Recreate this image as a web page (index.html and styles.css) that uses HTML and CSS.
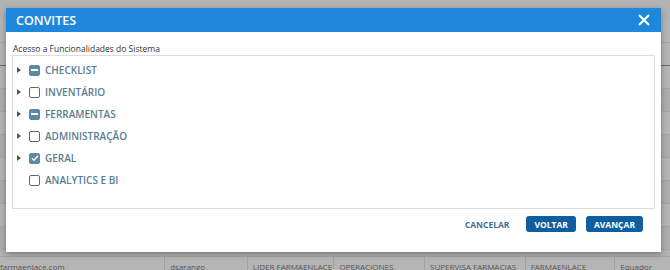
FILE: index.html
```html
<!DOCTYPE html>
<html lang="pt">

<head>
  <meta charset="UTF-8">
  <meta name="viewport" content="width=device-width, initial-scale=1.0">
  <title>Convites</title>
  <link rel="stylesheet" href="styles.css">
</head>

<body>
  <!-- tabela por trás do modal -->
  <div class="page">
    <div class="row"></div>
    <div class="row blue"></div>
    <div class="row"></div>
    <div class="row alt"></div>
    <div class="row"></div>
    <div class="row alt"></div>
    <div class="row"></div>
    <div class="row alt"></div>
    <div class="row"></div>
    <div class="row alt"></div>
    <div class="row last">
      <span class="c1">farmaenlace.com</span>
      <span class="c2">dsarango</span>
      <span class="c3">LIDER FARMAENLACE</span>
      <span class="c4">OPERACIONES</span>
      <span class="c5">SUPERVISA FARMACIAS</span>
      <span class="c6">FARMAENLACE</span>
      <span class="c7">Equador</span>
    </div>
  </div>

  <div class="modal">
    <div class="modal-head">
      <span class="title">CONVITES</span>
      <svg class="close" width="12" height="12" viewBox="0 0 12 12">
        <path d="M1 1L11 11M11 1L1 11" stroke="#fff" stroke-width="2" fill="none" />
      </svg>
    </div>
    <div class="modal-body">
      <p class="sub">Acesso a Funcionalidades do Sistema</p>
      <div class="tree">
        <div class="item"><i class="arrow"></i><span class="cb ind"></span><span class="label">CHECKLIST</span></div>
        <div class="item"><i class="arrow"></i><span class="cb"></span><span class="label">INVENTÁRIO</span></div>
        <div class="item"><i class="arrow"></i><span class="cb ind"></span><span class="label">FERRAMENTAS</span></div>
        <div class="item"><i class="arrow"></i><span class="cb"></span><span class="label">ADMINISTRAÇÃO</span></div>
        <div class="item"><i class="arrow"></i><span class="cb on">
            <svg width="8" height="8" viewBox="0 0 8 8"><path d="M1 4.2L3.1 6.2L7 1.8" stroke="#fff" stroke-width="1.5" fill="none" /></svg>
          </span><span class="label">GERAL</span></div>
        <div class="item"><i class="arrow none"></i><span class="cb"></span><span class="label">ANALYTICS E BI</span></div>
      </div>
    </div>
    <div class="modal-foot">
      <button class="link">CANCELAR</button>
      <button class="btn">VOLTAR</button>
      <button class="btn">AVANÇAR</button>
    </div>
  </div>
</body>

</html>
```

FILE: styles.css
```css
body {
  margin: 0;
  width: 670px;
  height: 270px;
  overflow: hidden;
  font-family: "Open Sans", "Noto Sans", sans-serif;
  background: #b3b3b3;
}

.page {
  padding-top: 20px;
}

.row {
  height: 22px;
  border-bottom: 1px solid #a6a6a6;
  background: #b5b5b5;
}

.row.alt {
  background: #adadad;
}

.row.blue {
  border-bottom: 1px solid #4d6f8e;
}

.row.last {
  height: 20px;
  margin-top: 6px;
  border-top: 1px solid #a4a4a4;
  font-size: 8px;
  color: #555;
  display: flex;
  line-height: 20px;
}

.row.last span {
  border-right: 1px solid #a2a2a2;
  padding-left: 5px;
  white-space: nowrap;
  overflow: hidden;
}

.c1 { width: 165px; margin-left: -5px; }
.c2 { width: 77px; }
.c3 { width: 81px; }
.c4 { width: 85px; }
.c5 { width: 95px; }
.c6 { width: 84px; }
.c7 { width: 50px; border-right: none !important; }

.modal {
  position: absolute;
  left: 6px;
  top: 8px;
  width: 655px;
  height: 244px;
  background: #fff;
  box-shadow: 0 2px 6px rgba(0, 0, 0, 0.35);
  display: flex;
  flex-direction: column;
}

.modal-head {
  height: 24px;
  background: #1f88dc;
  display: flex;
  align-items: center;
  justify-content: space-between;
  padding: 0 11px 0 10px;
}

.title {
  color: #fff;
  font-size: 12.5px;
  font-weight: 600;
}

.modal-body {
  padding: 0 6px;
}

.sub {
  margin: 11px 0 1px 1px;
  font-size: 8.5px;
  color: #333;
}

.tree {
  height: 145px;
  border: 1px solid #dcdcdc;
  padding: 3px 0 4px;
}

.item {
  height: 22px;
  display: flex;
  align-items: center;
}

.arrow {
  width: 0;
  height: 0;
  margin: 0 8px 0 4px;
  border-top: 3px solid transparent;
  border-bottom: 3px solid transparent;
  border-left: 4px solid #555;
}

.arrow.none {
  border-left-color: transparent;
}

.cb {
  width: 9px;
  height: 9px;
  border: 1.5px solid #666;
  border-radius: 2px;
  margin-right: 5px;
  display: flex;
  align-items: center;
  justify-content: center;
}

.cb.ind,
.cb.on {
  background: #5c8aa3;
  border-color: #5c8aa3;
}

.cb.ind::after {
  content: "";
  width: 7px;
  height: 2px;
  background: #fff;
}

.label {
  font-size: 10px;
  font-weight: 600;
  color: #5a7e91;
}

.modal-foot {
  flex: 1;
  display: flex;
  align-items: center;
  justify-content: flex-end;
  padding: 0 18px 13px 0;
  gap: 10px;
}

.modal-foot button {
  font-family: inherit;
  font-size: 8.5px;
  font-weight: 700;
  border: none;
  cursor: pointer;
}

.link {
  background: none;
  color: #3d6f98;
  margin-right: 1px;
}

.btn {
  height: 16px;
  padding: 0 8px;
  background: #0f5fa0;
  color: #fff;
  border-radius: 3px;
}
```
